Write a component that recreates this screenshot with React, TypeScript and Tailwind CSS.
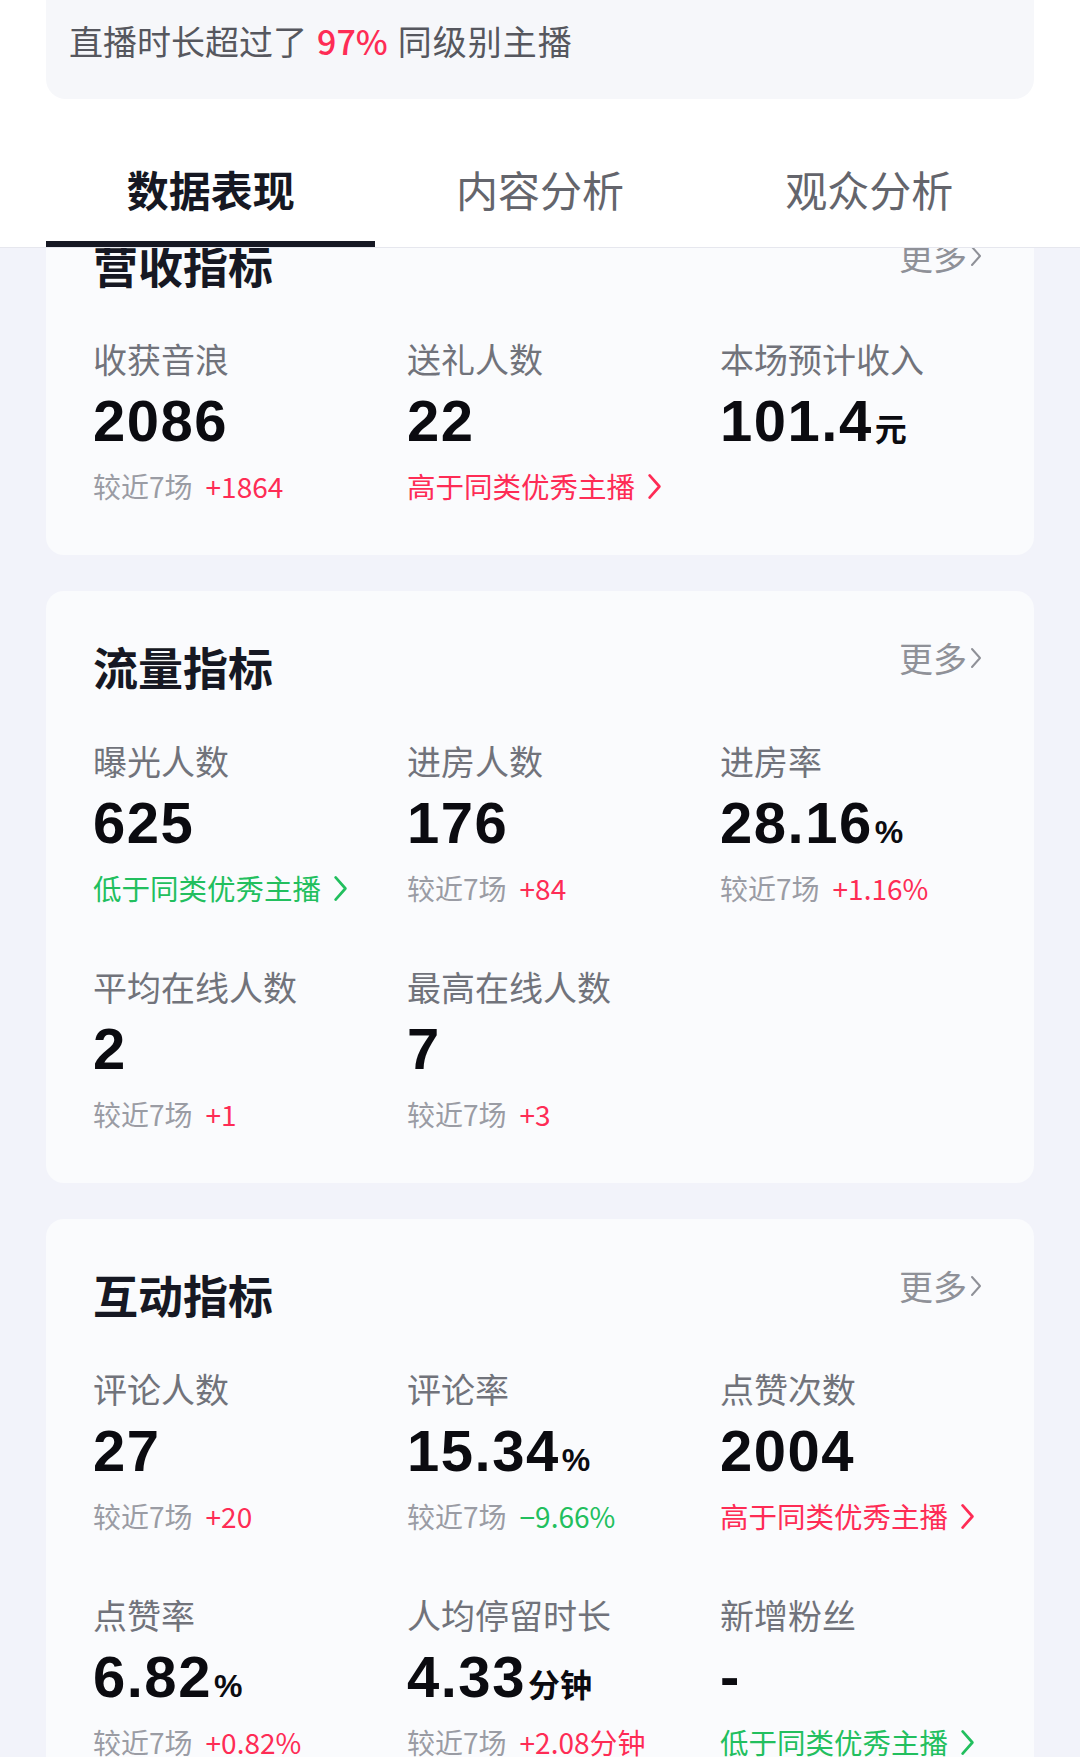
import type { ReactNode } from "react";

type Sub =
	| { kind: "cmp"; delta: string; up: boolean }
	| { kind: "rank"; text: string; up: boolean };

type Metric = {
	label: string;
	value: string;
	unit?: string;
	unitCjk?: boolean;
	sub?: Sub;
};

const sections: { title: string; items: Metric[] }[] = [
	{
		title: "营收指标",
		items: [
			{ label: "收获音浪", value: "2086", sub: { kind: "cmp", delta: "+1864", up: true } },
			{ label: "送礼人数", value: "22", sub: { kind: "rank", text: "高于同类优秀主播", up: true } },
			{ label: "本场预计收入", value: "101.4", unit: "元", unitCjk: true },
		],
	},
	{
		title: "流量指标",
		items: [
			{ label: "曝光人数", value: "625", sub: { kind: "rank", text: "低于同类优秀主播", up: false } },
			{ label: "进房人数", value: "176", sub: { kind: "cmp", delta: "+84", up: true } },
			{ label: "进房率", value: "28.16", unit: "%", sub: { kind: "cmp", delta: "+1.16%", up: true } },
			{ label: "平均在线人数", value: "2", sub: { kind: "cmp", delta: "+1", up: true } },
			{ label: "最高在线人数", value: "7", sub: { kind: "cmp", delta: "+3", up: true } },
		],
	},
	{
		title: "互动指标",
		items: [
			{ label: "评论人数", value: "27", sub: { kind: "cmp", delta: "+20", up: true } },
			{ label: "评论率", value: "15.34", unit: "%", sub: { kind: "cmp", delta: "−9.66%", up: false } },
			{ label: "点赞次数", value: "2004", sub: { kind: "rank", text: "高于同类优秀主播", up: true } },
			{ label: "点赞率", value: "6.82", unit: "%", sub: { kind: "cmp", delta: "+0.82%", up: true } },
			{ label: "人均停留时长", value: "4.33", unit: "分钟", unitCjk: true, sub: { kind: "cmp", delta: "+2.08分钟", up: true } },
			{ label: "新增粉丝", value: "-", sub: { kind: "rank", text: "低于同类优秀主播", up: false } },
		],
	},
];

const tabs = ["数据表现", "内容分析", "观众分析"];

const cjk = "font-['Noto_Sans_CJK_SC','Noto_Sans',sans-serif]";
const num = "font-['Liberation_Sans','Noto_Sans_CJK_SC',sans-serif]";

function Chevron({ className, width = "2.4" }: { className: string; width?: string }) {
	return (
		<svg viewBox="0 0 12 22" className={className} fill="none" stroke="currentColor" strokeWidth={width} strokeLinecap="round" strokeLinejoin="round">
			<polyline points="2,2 10,11 2,20" />
		</svg>
	);
}

function SubLine({ sub }: { sub?: Sub }) {
	if (!sub) return <div className="h-[40px]" />;
	if (sub.kind === "cmp") {
		return (
			<div className="flex h-[40px] items-center text-[28px] leading-[40px]">
				<span className="text-[#9a9ca4]">较近7场</span>
				<span className={`ml-[13px] ${sub.up ? "text-[#fe2c55]" : "text-[#22bf5e]"}`}>{sub.delta}</span>
			</div>
		);
	}
	return (
		<div className={`flex h-[40px] items-center text-[28.5px] leading-[40px] ${sub.up ? "text-[#fe2c55]" : "text-[#22bf5e]"}`}>
			<span>{sub.text}</span>
			<Chevron className="ml-[12px] h-[27px] w-[15px]" width="2.2" />
		</div>
	);
}

function MetricCell({ m }: { m: Metric }) {
	return (
		<div className="flex flex-col">
			<div className="h-[44px] text-[34px] leading-[44px] text-[#71737b]">{m.label}</div>
			<div className="mt-[8px] flex h-[64px] items-baseline text-[#0b0b10]">
				<span className={`${num} text-[58px] font-bold leading-[64px] tracking-[1.5px]`}>{m.value}</span>
				{m.unit && (
					<span className={`${m.unitCjk ? cjk : num} ml-[2px] text-[32px] font-bold`}>{m.unit}</span>
				)}
			</div>
			<div className="mt-[13px]">
				<SubLine sub={m.sub} />
			</div>
		</div>
	);
}

function Section({ title, items }: { title: string; items: Metric[] }): ReactNode {
	return (
		<section className="rounded-[18px] bg-[#fafbfd] pb-[49px] pl-[47px] pr-[52px] pt-[46px]">
			<div className="flex h-[60px] items-start justify-between">
				<h3 className="text-[45px] font-bold leading-[60px] text-[#161823]">{title}</h3>
				<div className="mt-[-9px] flex items-center text-[34px] leading-[60px] text-[#8f9198]">
					<span>更多</span>
					<Chevron className="ml-[3px] h-[24px] w-[12px]" width="2" />
				</div>
			</div>
			<div className="mt-[42px] grid grid-cols-[314px_313px_313px] gap-y-[57px]">
				{items.map((m) => (
					<MetricCell key={m.label} m={m} />
				))}
			</div>
		</section>
	);
}

export default function App() {
	return (
		<div className={`${cjk} h-[1757px] w-[1080px] overflow-hidden bg-white`}>
			{/* summary card, scrolled partly out of view */}
			<div className="h-[99px] overflow-hidden px-[46px]">
				<div className="-mt-[40px] rounded-[20px] bg-[#f6f7fa] pb-[34px] pl-[23px] pt-[57px] text-[34px] leading-[48px] text-[#56575e]">
					直播时长超过了
					<span className="mx-[10px] font-medium text-[#fe2c55]">97%</span>
					<span className="tracking-[1px]">同级别主播</span>
				</div>
			</div>

			{/* tabs */}
			<div className="border-b border-[#e6e7ee] bg-white px-[46px] pt-[60px]">
				<div className="grid grid-cols-3">
					{tabs.map((t, i) => (
						<div key={t} className="flex flex-col items-center">
							<span className={`text-[42px] leading-[60px] ${i === 0 ? "font-bold text-[#161823]" : "text-[#64656c]"}`}>{t}</span>
							<div className={`mt-[22px] h-[6px] w-full ${i === 0 ? "bg-[#161823]" : "bg-transparent"}`} />
						</div>
					))}
				</div>
			</div>

			{/* content */}
			<div className="h-[1509px] overflow-hidden bg-[#f2f3fa] px-[46px]">
				<div className="-mt-[59px] flex flex-col gap-[36px]">
					{sections.map((s) => (
						<Section key={s.title} title={s.title} items={s.items} />
					))}
				</div>
			</div>
		</div>
	);
}
